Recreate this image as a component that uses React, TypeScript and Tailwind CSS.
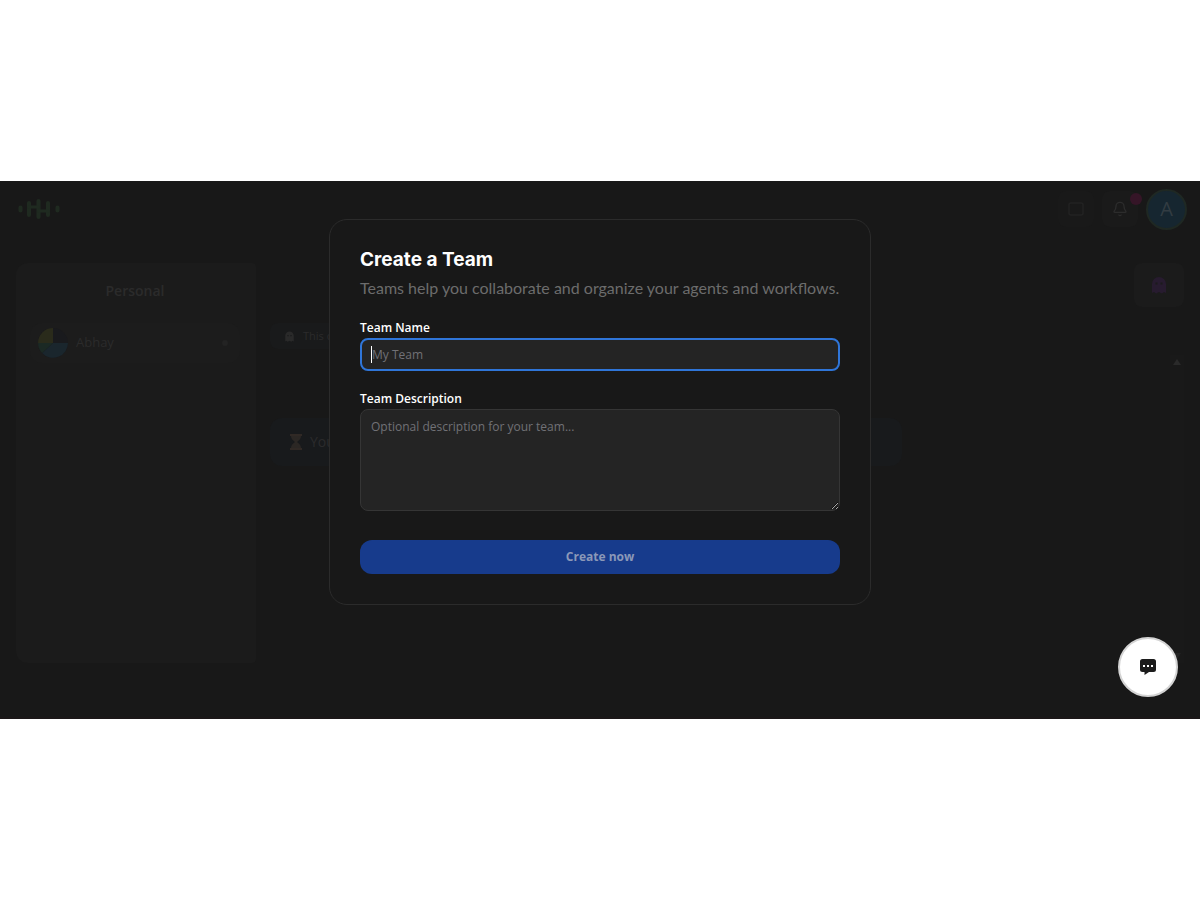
import React from "react";
import { Bell } from "lucide-react";

function Logo() {
  return (
    <svg width="42" height="22" viewBox="0 0 42 22" fill="none" stroke="#1f2a20" strokeWidth="4" strokeLinecap="round" aria-label="Logo">
      <path d="M2.500 9.500v3M11 5v12M20.500 3v16M30 5v12M39.500 9.500v3" />
      <path d="M11 9h9M21 13h9" strokeWidth="3" />
    </svg>
  );
}

function Ghost({ size, color }: { size: number; color: string }) {
  return (
    <svg width={size} height={size} viewBox="0 0 16 18" fill={color} aria-hidden="true">
      <path
        fillRule="evenodd"
        d="M1 17V8a7 7 0 0 1 14 0v9l-2-1-2 1.500-3-1.500-3 1.500-2-1.500zM4.500 6.500v2h2v-2zM9.500 6.500v2h2v-2z"
      />
    </svg>
  );
}

function Hourglass() {
  return (
    <svg width="12" height="16" viewBox="0 0 12 16" aria-hidden="true">
      <path d="M0 0h12v2H0zM0 14h12v2H0z" fill="#302925" />
      <path d="M1 2h10c0 3-2 4.500-4 6 2 1.500 4 3 4 6H1c0-3 2-4.500 4-6-2-1.500-4-3-4-6z" fill="#2b2724" />
    </svg>
  );
}

function Header() {
  return (
    <header className="flex h-14 items-center justify-between pr-[13px] pl-[18px]">
      <Logo />
      <div className="flex items-center gap-2">
        <button aria-label="Display" className="flex size-9 items-center justify-center rounded-lg bg-[#191919]">
          <svg width="16" height="14" viewBox="0 0 16 14" fill="none" stroke="#222222" strokeWidth="1.500" aria-hidden="true">
            <rect x="1" y="1" width="14" height="12" rx="2" />
          </svg>
        </button>
        <button aria-label="Notifications" className="relative flex size-9 items-center justify-center rounded-lg bg-[#1a1a1a]">
          <Bell size={16} color="#2c2c2c" />
          <span className="absolute top-0.5 -right-1 size-3 rounded-full bg-[#351527]" />
        </button>
        <button className="flex size-[41px] items-center justify-center rounded-full border-2 border-[#1f2823] bg-[#162630] text-xl text-[#323c42]">
          A
        </button>
      </div>
    </header>
  );
}

function Sidebar() {
  return (
    <aside className="h-[400px] w-60 shrink-0 rounded-xl rounded-r-sm bg-[#1b1b1b] pt-[18px] pr-4 pl-3.5">
      <h2 className="text-center text-sm leading-5 font-semibold text-[#2b2b2b]">Personal</h2>
      <button className="mt-[22px] flex h-10 w-full items-center gap-2 rounded-xl bg-[#1c1c1c] px-2 text-[13px] text-[#2b2b2b]">
        <svg width="30" height="30" viewBox="0 0 30 30" aria-hidden="true">
          <circle cx="15" cy="15" r="15" fill="#191a1d" />
          <path d="M15 15V0A15 15 0 0 0 0 15z" fill="#2a2b1b" />
          <path d="M15 15h15a15 15 0 0 1-26 10z" fill="#1a262d" />
          <path d="M15 15H0a15 15 0 0 0 4 10z" fill="#1b2924" />
        </svg>
        <span className="flex-1 text-left">Abhay</span>
        <span className="mr-1 size-1.5 rounded-full bg-[#232323]" />
      </button>
    </aside>
  );
}

function Workspace() {
  return (
    <div className="flex flex-1 justify-between pl-3.5">
      <div className="w-[632px] pt-[60px]">
        <div className="flex h-[26px] w-60 items-center gap-2 rounded-lg bg-[#191a1b] px-3.5 text-[11px] text-[#2b2b2b]">
          <Ghost size={11} color="#2a2a2a" />
          <span>This c</span>
        </div>
        <div className="mt-[69px] flex h-12 items-center gap-2 rounded-xl bg-[#181a1c] px-5 text-sm text-[#2b2b2c]">
          <Hourglass />
          <span>You</span>
        </div>
      </div>
      <div className="flex flex-col items-end justify-between">
        <button aria-label="Agent" className="flex h-11 w-[50px] items-center justify-center rounded-lg bg-[#1b1b1b]">
          <Ghost size={18} color="#271b2f" />
        </button>
        <div className="flex h-[308px] w-3.5 flex-col items-center justify-between bg-[#191919] py-1">
          <svg width="8" height="6" viewBox="0 0 8 6" fill="#2a2a2a" aria-hidden="true">
            <path d="M4 0l4 6H0z" />
          </svg>
          <svg width="8" height="6" viewBox="0 0 8 6" fill="#232323" aria-hidden="true">
            <path d="M4 6l4-6H0z" />
          </svg>
        </div>
      </div>
    </div>
  );
}

function CreateTeamDialog() {
  return (
    <form
      role="dialog"
      aria-labelledby="dialog-title"
      className="w-full max-w-[542px] rounded-[18px] border border-[#2b2b2b] bg-[#181818] px-[30px] pt-7 pb-[30px]"
      onSubmit={(e) => e.preventDefault()}
    >
      <h1 id="dialog-title" className="font-['Inter',sans-serif] text-[19px] leading-6 font-bold text-white">
        Create a Team
      </h1>
      <p className="mt-1 font-['Lato',sans-serif] text-base leading-6 text-[#6c6c6c]">
        Teams help you collaborate and organize your agents and workflows.
      </p>
      <label htmlFor="team-name" className="mt-[18px] block text-xs leading-5 font-semibold text-white">
        Team Name
      </label>
      <div className="relative">
        <input
          id="team-name"
          autoFocus
          placeholder="My Team"
          className="peer block h-[33px] w-full rounded-lg border-2 border-[#2f75d8] bg-[#242424] px-2.5 text-xs text-white caret-transparent outline-none placeholder:text-[#717176]"
        />
        <span className="pointer-events-none absolute top-2 left-[11px] hidden h-[17px] w-px bg-white peer-placeholder-shown:block" />
      </div>
      <label htmlFor="team-description" className="mt-[18px] block text-xs leading-5 font-semibold text-white">
        Team Description
      </label>
      <textarea
        id="team-description"
        placeholder="Optional description for your team..."
        className="block h-[102px] w-full resize-y rounded-lg border border-[#353535] bg-[#242424] px-2.5 py-[7px] text-xs leading-5 text-white scheme-dark outline-none placeholder:text-[#717176]"
      />
      <button className="mt-[29px] block h-[34px] w-full rounded-xl bg-[#173b8c] text-xs font-bold text-[#8b98b8]">
        Create now
      </button>
    </form>
  );
}

export default function App() {
  return (
    <div className="flex min-h-screen flex-col justify-center bg-white font-['Open_Sans','Noto_Sans',sans-serif]">
      <main className="relative overflow-hidden border-b-2 border-[#1b1718] bg-[#181818]">
        <Header />
        <div className="flex px-4 pt-[26px] pb-[54px]">
          <Sidebar />
          <Workspace />
        </div>
        <div className="absolute inset-0 flex items-start justify-center pt-[38px]">
          <CreateTeamDialog />
        </div>
        <button
          aria-label="Open chat"
          className="absolute right-[22px] bottom-5 flex size-[60px] items-center justify-center rounded-full border-2 border-[#d4d4d4] bg-white"
        >
          <svg width="16" height="16" viewBox="0 0 16 16" aria-hidden="true">
            <path d="M2.500 0h11A2.500 2.500 0 0 1 16 2.500v8a2.500 2.500 0 0 1-2.500 2.500H9l-4.500 3v-3h-2A2.500 2.500 0 0 1 0 10.500v-8A2.500 2.500 0 0 1 2.500 0z" fill="#1c1c1c" />
            <path d="M3 6h2v2H3zM7 6h2v2H7zM11 6h2v2h-2z" fill="#fff" />
          </svg>
        </button>
      </main>
    </div>
  );
}
